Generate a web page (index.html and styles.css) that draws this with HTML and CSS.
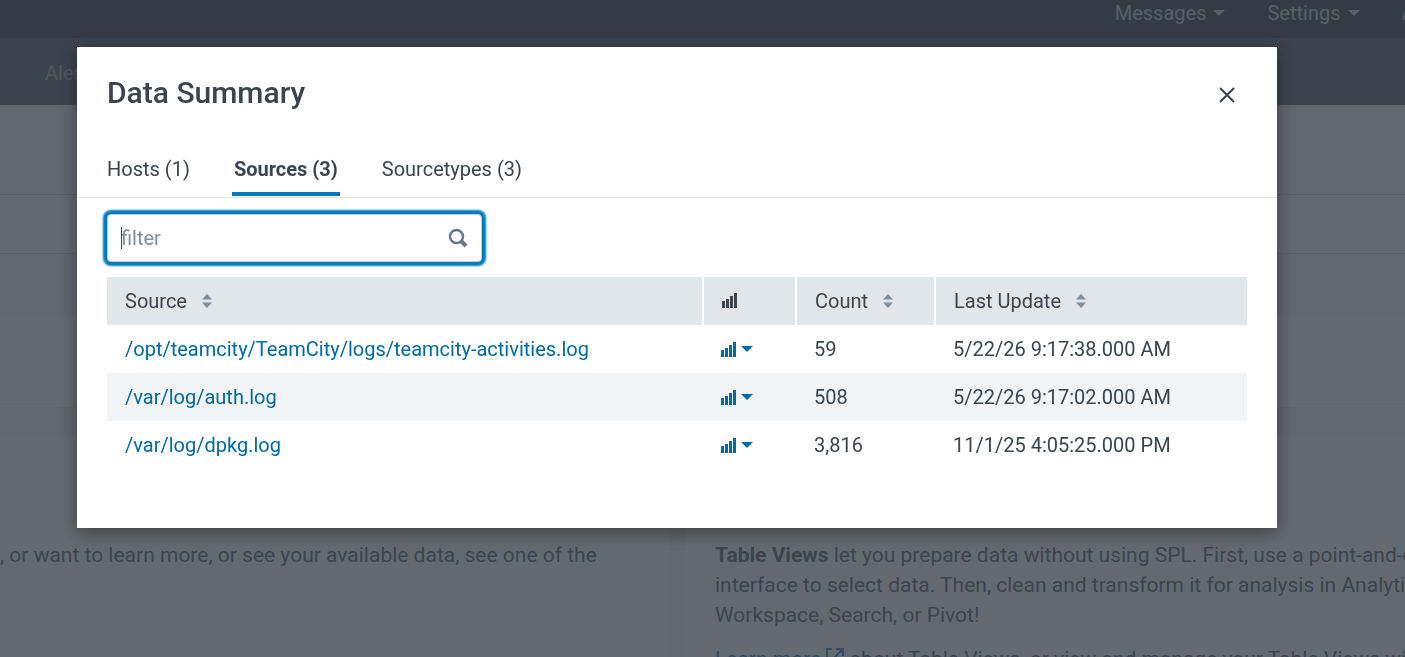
FILE: index.html
```html
<!DOCTYPE html>
<html lang="en">
<head>
    <meta charset="UTF-8">
    <meta name="viewport" content="width=device-width, initial-scale=1.0">
    <title>Data Summary</title>
    <link rel="stylesheet" href="styles.css">
</head>
<body>

    <div class="page">
        <header class="topbar">
            <a href="#" class="top-link">Messages <span class="caret"></span></a>
            <a href="#" class="top-link">Settings <span class="caret"></span></a>
            <a href="#" class="top-link">Activity <span class="caret"></span></a>
        </header>
        <nav class="appbar">
            <a href="#">Alerts</a>
        </nav>

        <div class="title-row"></div>
        <div class="search-row"></div>
        <div class="options-row"></div>
        <div class="history-row"></div>
        <div class="spacer-row"></div>

        <div class="help">
            <section class="panel panel-left">
                <p>, or want to learn more, or see your available data, see one of the</p>
            </section>
            <section class="panel panel-right">
                <p><strong>Table Views</strong> let you prepare data without using SPL. First, use a point-and-click<br>
                interface to select data. Then, clean and transform it for analysis in Analytics<br>
                Workspace, Search, or Pivot!</p>
                <p><a href="#">Learn more <svg class="external" viewBox="0 0 18 18"><path d="M6 1H1v16h16v-5M10 1h7v7M17 1L7 11"/></svg></a> about Table Views, or view and manage your Table Views with</p>
            </section>
        </div>
    </div>

    <div class="backdrop">
        <div class="modal" role="dialog" aria-labelledby="modal-title">
            <div class="modal-header">
                <h1 id="modal-title">Data Summary</h1>
                <button type="button" class="close" aria-label="Close">
                    <svg viewBox="0 0 16 16"><path d="M1 1l14 14M15 1L1 15"/></svg>
                </button>
            </div>

            <div class="tabs">
                <button type="button" class="tab">Hosts (1)</button>
                <button type="button" class="tab active">Sources (3)</button>
                <button type="button" class="tab">Sourcetypes (3)</button>
            </div>

            <div class="modal-body">
                <div class="filter">
                    <input type="text" placeholder="filter" aria-label="filter" autofocus>
                    <svg class="search-icon" viewBox="0 0 20 20"><circle cx="8.5" cy="8.5" r="6.5" stroke-width="2.5"/><path d="M13 13l5 5" stroke-width="4"/></svg>
                </div>

                <table>
                    <thead>
                        <tr>
                            <th>Source <svg class="sort" viewBox="0 0 10 14"><path d="M0 5.5L5 0l5 5.5zM0 8.5h10L5 14z"/></svg></th>
                            <th class="col-chart"><svg class="bars" viewBox="0 0 15 15"><path d="M0 8h3v7H0zM4 6h3v9H4zM8 3h3v12H8zM12 0h3v15h-3z"/></svg></th>
                            <th class="col-count">Count <svg class="sort" viewBox="0 0 10 14"><path d="M0 5.5L5 0l5 5.5zM0 8.5h10L5 14z"/></svg></th>
                            <th class="col-update">Last Update <svg class="sort" viewBox="0 0 10 14"><path d="M0 5.5L5 0l5 5.5zM0 8.5h10L5 14z"/></svg></th>
                        </tr>
                    </thead>
                    <tbody>
                        <tr>
                            <td><a href="#">/opt/teamcity/TeamCity/logs/teamcity-activities.log</a></td>
                            <td><button type="button" class="chart-menu" aria-label="Chart"><svg class="bars" viewBox="0 0 15 15"><path d="M0 8h3v7H0zM4 6h3v9H4zM8 3h3v12H8zM12 0h3v15h-3z"/></svg><span class="caret"></span></button></td>
                            <td>59</td>
                            <td>5/22/26 9:17:38.000 AM</td>
                        </tr>
                        <tr>
                            <td><a href="#">/var/log/auth.log</a></td>
                            <td><button type="button" class="chart-menu" aria-label="Chart"><svg class="bars" viewBox="0 0 15 15"><path d="M0 8h3v7H0zM4 6h3v9H4zM8 3h3v12H8zM12 0h3v15h-3z"/></svg><span class="caret"></span></button></td>
                            <td>508</td>
                            <td>5/22/26 9:17:02.000 AM</td>
                        </tr>
                        <tr>
                            <td><a href="#">/var/log/dpkg.log</a></td>
                            <td><button type="button" class="chart-menu" aria-label="Chart"><svg class="bars" viewBox="0 0 15 15"><path d="M0 8h3v7H0zM4 6h3v9H4zM8 3h3v12H8zM12 0h3v15h-3z"/></svg><span class="caret"></span></button></td>
                            <td>3,816</td>
                            <td>11/1/25 4:05:25.000 PM</td>
                        </tr>
                    </tbody>
                </table>
            </div>
        </div>
    </div>

</body>
</html>
```

FILE: styles.css
```css
* {
    box-sizing: border-box;
}

body {
    margin: 0;
    font-family: Roboto, "Liberation Sans", sans-serif;
    font-size: 20px;
    line-height: 30px;
    color: #3c444d;
}

button, input {
    font: inherit;
    color: inherit;
}

a {
    color: #006aa3;
    text-decoration: none;
}

.caret {
    display: inline-block;
    border: 6px solid transparent;
    border-top-color: currentColor;
    border-bottom: 0;
}

/* Page behind the dialog */
.page {
    height: 100vh;
    overflow: hidden;
    background: #f2f4f5;
}

.topbar {
    display: flex;
    justify-content: flex-end;
    gap: 42px;
    height: 38px;
    margin-right: -81px;
    background: #171d21;
}

.top-link {
    display: flex;
    align-items: center;
    gap: 7px;
    height: 26px;
    color: #c3cbd4;
}

.appbar {
    height: 67px;
    padding: 20px 45px;
    background: #3c444d;
}

.appbar a {
    color: #a0a8b0;
}

.title-row {
    height: 90px;
    border-bottom: 1px solid #c3cbd4;
}

.search-row {
    height: 59px;
    background: #f7f8fa;
    border-bottom: 1px solid #c3cbd4;
}

.options-row {
    height: 63px;
}

.history-row {
    height: 91px;
    background: #fff;
    border-bottom: 1px solid #e1e6eb;
}

.spacer-row {
    height: 29px;
}

.help {
    display: flex;
    gap: 15px;
    min-height: 100%;
}

.panel {
    padding-top: 103px;
    background: #fff;
    font-size: 21px;
    white-space: nowrap;
}

.panel p {
    margin: 0 0 14px;
}

.panel-left {
    flex: 0 0 670px;
}

.panel-right {
    flex: 1 0 0;
    padding-left: 30px;
}

.external {
    width: 18px;
    height: 18px;
    fill: none;
    stroke: currentColor;
    stroke-width: 2;
}

/* Dialog */
.backdrop {
    position: fixed;
    inset: 0;
    background: rgba(60, 68, 77, 0.8);
}

.modal {
    margin: 47px 128px 0 77px;
    background: #fff;
    box-shadow: 0 4px 16px rgba(0, 0, 0, 0.4);
}

.modal-header {
    display: flex;
    align-items: flex-end;
    justify-content: space-between;
    padding: 28px 42px 0 30px;
}

h1 {
    margin: 0;
    font-size: 30px;
    font-weight: 500;
    line-height: 36px;
}

.close {
    display: flex;
    padding: 0 0 8px;
    border: 0;
    background: none;
}

.close svg {
    width: 16px;
    height: 16px;
    fill: none;
    stroke: currentColor;
    stroke-width: 2;
}

.tabs {
    display: flex;
    gap: 40px;
    padding: 36px 30px 0;
    border-bottom: 1px solid #e1e6eb;
}

.tab {
    height: 49px;
    margin-bottom: 1px;
    padding: 0 2px 2px;
    border: 0;
    border-bottom: 4px solid transparent;
    background: none;
}

.tab:first-child {
    padding-left: 0;
}

.tab.active {
    border-bottom-color: #007abd;
    font-weight: 700;
}

.modal-body {
    padding: 16px 30px 59px;
}

.filter {
    display: grid;
    grid-template-columns: 1fr 46px;
    align-items: center;
    width: 375px;
}

.filter input {
    grid-area: 1 / 1 / 2 / 3;
    height: 48px;
    padding: 0 46px 0 13px;
    border: 1px solid #c3cbd4;
    border-radius: 4px;
    outline: 0;
    box-shadow: 0 0 2px 4px #007abd;
}

.filter input::placeholder {
    color: #818d99;
}

/* Text cursor */
.filter::after {
    content: "";
    grid-area: 1 / 1;
    width: 1px;
    height: 22px;
    margin-left: 14px;
    background: #3c444d;
    pointer-events: none;
}

.search-icon {
    grid-area: 1 / 2;
    width: 20px;
    height: 20px;
    margin-left: 12px;
    fill: none;
    stroke: #6b7785;
    pointer-events: none;
}

table {
    width: 100%;
    margin-top: 15px;
    border-collapse: collapse;
    table-layout: fixed;
}

th, td {
    height: 48px;
    padding: 0 18px;
    text-align: left;
    font-weight: 400;
    white-space: nowrap;
}

th {
    background: #e1e6eb;
}

th + th {
    border-left: 2px solid #fff;
}

tbody tr:nth-child(even) {
    background: #f2f4f5;
}

.col-chart {
    width: 93px;
}

.col-count {
    width: 139px;
}

.col-update {
    width: 312px;
}

.sort {
    width: 10px;
    height: 14px;
    margin-left: 10px;
    fill: #818d99;
}

.bars {
    width: 15px;
    height: 15px;
    fill: currentColor;
}

.chart-menu {
    display: flex;
    align-items: center;
    gap: 5px;
    padding: 0;
    border: 0;
    background: none;
    color: #006aa3;
}
```
